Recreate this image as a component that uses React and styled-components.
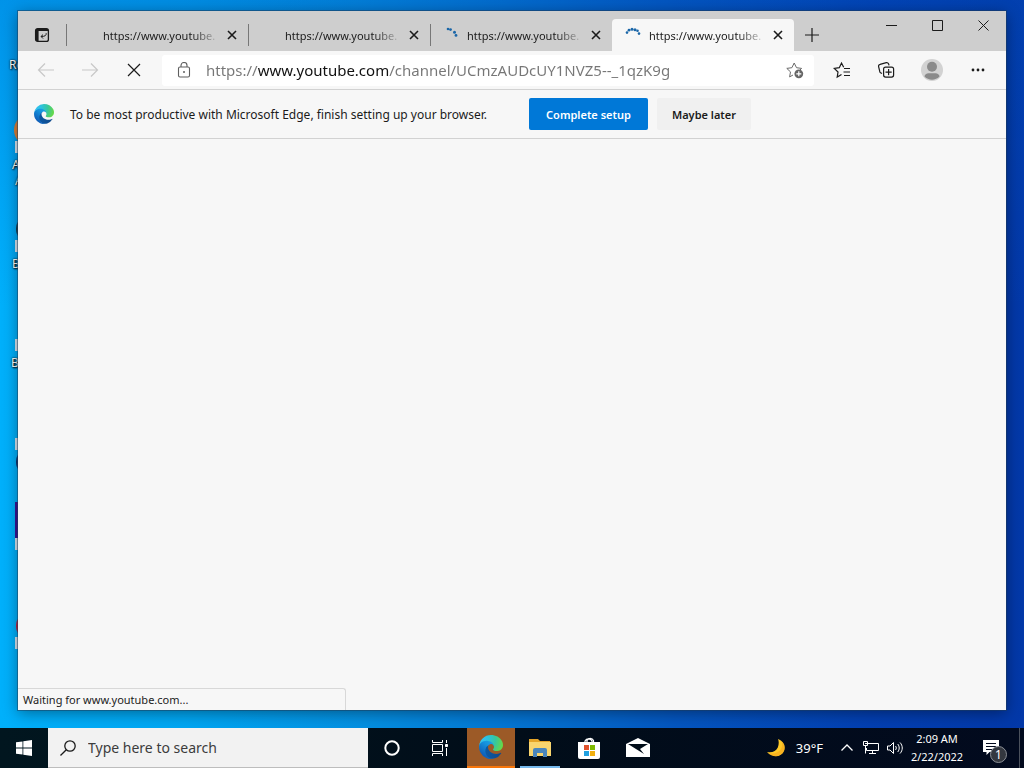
import React, { useState } from 'react';
import styled, { createGlobalStyle } from 'styled-components';

const GlobalStyle = createGlobalStyle`
    * {
        box-sizing: border-box;
    }

    body {
        margin: 0;
        font-family: "Noto Sans", "Open Sans", sans-serif;
        font-size: 11px;
        color: #1b1b1b;
    }

    button, input {
        font-family: inherit;
        border: none;
        outline: none;
        padding: 0;
    }

    svg {
        display: block;
        flex: none;
    }
`;

const Screen = styled.div`
    position: relative;
    display: grid;
    grid-template-rows: 1fr 40px;
    height: 100vh;
    overflow: hidden;
    background:
        linear-gradient(to bottom, rgba(0, 80, 190, 0.3), rgba(0, 80, 190, 0) 40%),
        linear-gradient(to right, #00b0fb 0%, #00a6f2 18%, #0490e2 35%, #0478d4 48%, #0456c0 66%, #033fb2 85%, #0338a8 100%);
`;

const DesktopItem = styled.div`
    position: absolute;
    top: ${props => props.$top}px;
    left: ${props => props.$left}px;
    color: white;
    font-size: 12px;
    line-height: 16px;
    text-shadow: 1px 1px 2px black, 0 0 2px black;
`;

const Window = styled.main`
    position: relative;
    display: flex;
    flex-direction: column;
    min-width: 0;
    margin: 11px 18px 18px;
    background: #f7f7f7;
    box-shadow: 0 0 0 1px rgba(30, 60, 90, 0.5), 0 3px 14px rgba(0, 0, 0, 0.4);
`;

const TabStrip = styled.div`
    display: flex;
    height: 40px;
    background: #cecece;
`;

const IconButton = styled.button`
    display: flex;
    align-items: center;
    justify-content: center;
    flex: none;
    width: ${props => props.$width || 44}px;
    height: ${props => props.$height || 32}px;
    background: transparent;
    color: ${props => props.disabled ? '#c8c8c8' : '#1b1b1b'};
`;

const TabList = styled.div`
    display: flex;
    align-items: flex-end;
    min-width: 0;
`;

const Tab = styled.div`
    display: flex;
    align-items: center;
    width: 182px;
    height: 32px;
    padding: 0 4px 0 12px;
    border-left: 1px solid ${props => props.$line ? '#777777' : 'transparent'};
    border-image: ${props => props.$line ? 'linear-gradient(transparent 6px, #777777 6px, #777777 26px, transparent 26px) 1' : 'none'};
    border-radius: ${props => props.$active ? '4px 4px 0 0' : '0'};
    background: ${props => props.$active ? '#f7f7f7' : 'transparent'};
`;

const TabIcon = styled.span`
    flex: none;
    width: 16px;
    height: 16px;
    margin-right: 8px;
`;

const TabTitle = styled.span`
    flex: 1;
    white-space: nowrap;
    mask-image: linear-gradient(to right, black 76%, transparent);
`;

const WindowButtons = styled.div`
    display: flex;
    margin-left: auto;
`;

const Toolbar = styled.div`
    display: flex;
    align-items: center;
    height: 39px;
    padding: 0 6px;
    border-bottom: 1px solid #d2d2d2;
`;

const AddressBar = styled.label`
    display: flex;
    align-items: center;
    flex: 1;
    min-width: 0;
    height: 31px;
    margin: 0 6px;
    border-radius: 3px;
    background: white;
    color: #5f5f5f;
`;

const LockBox = styled.span`
    display: flex;
    justify-content: center;
    width: 44px;
`;

const AddressInput = styled.input`
    flex: 1;
    min-width: 0;
    height: 30px;
    font-size: 15px;
    color: transparent;
    caret-color: black;
    background: linear-gradient(to right, #767676 52px, #111111 52px, #111111 183px, #767676 183px);
    background-clip: text;
`;

const SetupBar = styled.div`
    display: flex;
    align-items: center;
    height: 49px;
    padding: 0 16px;
    border-bottom: 1px solid #d2d2d2;
    font-size: 12px;
`;

const SetupText = styled.span`
    flex: 0 1 427px;
    margin: 0 32px 0 16px;
    white-space: nowrap;
`;

const SetupButton = styled.button`
    flex: none;
    width: ${props => props.$primary ? 119 : 94}px;
    height: 32px;
    margin-right: 9px;
    border-radius: 2px;
    font-size: 11px;
    font-weight: 600;
    color: ${props => props.$primary ? 'white' : '#1b1b1b'};
    background: ${props => props.$primary ? '#0078d7' : '#f0f0f0'};
`;

const Page = styled.section`
    flex: 1;
`;

const StatusBubble = styled.div`
    position: absolute;
    bottom: 0;
    left: 0;
    width: 328px;
    height: 22px;
    padding-left: 5px;
    line-height: 22px;
    border-top: 1px solid #d8d8d8;
    border-right: 1px solid #d8d8d8;
    border-radius: 0 3px 0 0;
    background: #f7f7f7;
`;

const Taskbar = styled.footer`
    display: flex;
    position: relative;
    min-width: 0;
    background: linear-gradient(to right, #01161f, #010d19 50%, #020a1e);
    color: white;
`;

const TaskButton = styled.button`
    display: flex;
    align-items: center;
    justify-content: center;
    flex: none;
    width: ${props => props.$width || 48}px;
    color: white;
    background: ${props => props.$alert ? '#9c5a27' : 'transparent'};
    border-bottom: ${props => props.$alert ? '2px solid #f7760b' : 'none'};
`;

const AppButtons = styled.div`
    display: flex;
    gap: 1px;
    margin-left: 3px;
`;

const Underlined = styled(TaskButton)`
    background: linear-gradient(#76b9ed, #76b9ed) center bottom / 40px 2px no-repeat;
`;

const SearchBox = styled.label`
    display: flex;
    align-items: center;
    flex: 0 1 320px;
    min-width: 0;
    padding-left: 12px;
    gap: 12px;
    color: #1b1b1b;
    background: #f2f2f2;
    border-bottom: 1px solid #bdbdbd;
`;

const SearchInput = styled.input`
    flex: 1;
    min-width: 0;
    font-size: 14px;
    background: transparent;

    &::placeholder {
        color: #3c3c3c;
        opacity: 1;
    }
`;

const Tray = styled.div`
    display: flex;
    margin-left: auto;
    padding-right: 4px;
    border-right: 1px solid #4b515c;
    margin-right: 4px;
`;

const Weather = styled.button`
    display: flex;
    align-items: center;
    gap: 11px;
    margin-right: 12px;
    font-size: 13px;
    color: white;
    background: transparent;
`;

const Clock = styled.button`
    width: 60px;
    font-size: 11px;
    line-height: 18px;
    white-space: nowrap;
    color: white;
    background: transparent;
`;

const Notifications = styled(TaskButton)`
    position: relative;
`;

const Count = styled.span`
    position: absolute;
    top: 18px;
    right: 8px;
    width: 17px;
    height: 17px;
    line-height: 15px;
    border: 1px solid #8b8f96;
    border-radius: 50%;
    font-size: 12px;
    background: #33373f;
`;

const Line = ({ size = 20, width = 1, children, ...rest }) => (
    <svg width={size} height={size} viewBox={`0 0 ${size} ${size}`} fill="none" stroke="currentColor" strokeWidth={width} aria-hidden="true" {...rest}>
        {children}
    </svg>
);

const EdgeLogo = ({ size, id }) => (
    <svg width={size} height={size} viewBox="0 0 256 256" aria-hidden="true">
        <defs>
            <linearGradient id={`${id}-a`} x1="60" y1="177" x2="240" y2="177" gradientUnits="userSpaceOnUse">
                <stop offset="0" stopColor="#0c59a4" />
                <stop offset="1" stopColor="#114a8b" />
            </linearGradient>
            <linearGradient id={`${id}-b`} x1="150" y1="80" x2="45" y2="215" gradientUnits="userSpaceOnUse">
                <stop offset="0" stopColor="#1b9de2" />
                <stop offset="0.3" stopColor="#1595df" />
                <stop offset="1" stopColor="#0f5fb9" />
            </linearGradient>
            <radialGradient id={`${id}-c`} cx="26" cy="48" r="230" gradientUnits="userSpaceOnUse">
                <stop offset="0" stopColor="#35c1f1" />
                <stop offset="0.3" stopColor="#2cc2df" />
                <stop offset="0.65" stopColor="#36c79e" />
                <stop offset="1" stopColor="#66d849" />
            </radialGradient>
        </defs>
        <path fill={`url(#${id}-a)`} d="M231 190.5c-3.4 1.8-6.9 3.4-10.5 4.7a101.5 101.5 0 0 1-35.9 6.5c-47.3 0-88.5-32.5-88.5-74.3 0-11.5 6.4-21.9 16.5-27.5-42.8 1.8-53.8 46.4-53.8 72.5 0 73.9 68.1 81.4 82.8 81.4 7.9 0 19.8-2.3 27-4.6l1.3-.4a128.3 128.3 0 0 0 66.6-52.8 4 4 0 0 0-5.5-5.5z" />
        <path fill={`url(#${id}-b)`} d="M105.7 241.4a79.2 79.2 0 0 1-22.7-21.3 80.7 80.7 0 0 1 29.5-120c3.2-1.5 8.5-4.1 15.6-4a32.4 32.4 0 0 1 25.7 13 31.9 31.9 0 0 1 6.3 18.7c0-.2 24.5-79.6-80-79.6-43.9 0-80 41.7-80 78.2 0 19.3 4.2 38.4 12.1 56a128 128 0 0 0 156.5 67.1 75.5 75.5 0 0 1-62.8-8.1z" />
        <path fill={`url(#${id}-c)`} d="M152.3 148.9c-.8 1-3.3 2.5-3.3 5.7 0 2.6 1.7 5.1 4.7 7.2 14.4 10 41.5 8.7 41.6 8.7 10.7 0 21.1-2.9 30.3-8.3 18.8-11 30.4-31.2 30.4-53 .3-22.4-8-37.3-11.3-43.9C223.5 23.9 177.7 0 128 0A128 128 0 0 0 0 126.2c.5-36.5 36.8-66 80-66 3.5 0 23.5.3 42 10.1 16.3 8.6 24.9 18.9 30.8 29.2 6.2 10.7 7.3 24.1 7.3 29.5 0 5.3-2.7 13.3-7.8 19.9z" />
    </svg>
);

const spinners = {
    short: [[5, 2, 1.3], [7.5, 2.6, 1.4], [11.5, 5.2, 1.5], [13, 8.4, 1.4]],
    long: [[2, 5.6, 1.3], [4, 3.2, 1.4], [7, 2.2, 1.5], [10, 2.8, 1.5], [12.5, 3.8, 1.3], [14, 6.6, 1.3]],
};

const Spinner = ({ kind }) => (
    <svg width="16" height="16" viewBox="0 0 16 16" fill="#1a66a8" aria-hidden="true">
        {spinners[kind].map(([x, y, r]) => <circle key={x} cx={x} cy={y} r={r} />)}
    </svg>
);

const tabs = [
    { id: 1 },
    { id: 2 },
    { id: 3, spinner: 'short' },
    { id: 4, spinner: 'long', active: true },
];

const desktopItems = [
    { top: 57, left: 9, label: 'Re' },
    { top: 157, left: 12, label: 'A' },
    { top: 173, left: 15, label: 'A' },
    { top: 256, left: 12, label: 'B' },
    { top: 355, left: 11, label: 'B' },
];

const shortcuts = [
    { top: 114, color: '#d9803a', radius: 16 },
    { top: 213, color: '#1b3a4c', radius: 14 },
    { top: 312 },
    { top: 411 },
    { top: 446, color: '#12306e', radius: 14, bare: true },
    { top: 511, color: '#3a1496' },
    { top: 610, color: '#c81e3c', radius: 14 },
];

const Desktop = () => (
    <>
        {shortcuts.map(item => (
            <DesktopItem key={item.top} $top={item.top} $left={14}>
                <svg width="32" height="40" viewBox="0 0 32 40" overflow="visible" aria-hidden="true">
                    {item.color && (item.radius
                        ? <circle cx="16" cy="16" r={item.radius} fill={item.color} />
                        : <path fill={item.color} d="M1-9h30v36H1z" />)}
                    {!item.bare && <path fill="#d9e4ee" d="M1 27h12v12H1z" />}
                </svg>
            </DesktopItem>
        ))}
        {desktopItems.map(item => (
            <DesktopItem key={item.top} $top={item.top} $left={item.left}>{item.label}</DesktopItem>
        ))}
    </>
);

const Tabs = () => (
    <TabStrip>
        <IconButton $width={48} $height={48} aria-label="Tab actions">
            <Line size={16} width={1.3}>
                <rect x="1.6" y="1.6" width="12.8" height="12.8" rx="2" />
                <path d="M2 3h12" strokeWidth="2" />
                <path d="M3.3 4v10" strokeWidth="2.6" />
                <path d="M12.2 6.2c.2 2.4-1.400 3.300-5 3.300M9 7.600L7 9.500l2 2" strokeWidth="1" />
            </Line>
        </IconButton>
        <TabList>
            {tabs.map(tab => (
                <Tab key={tab.id} $active={tab.active} $line={tab.id < 4}>
                    <TabIcon>{tab.spinner && <Spinner kind={tab.spinner} />}</TabIcon>
                    <TabTitle>https://www.youtube.</TabTitle>
                    <IconButton $width={24} aria-label="Close tab">
                        <Line size={10} width={1.6}><path d="M1 1l8 8M9 1L1 9" /></Line>
                    </IconButton>
                </Tab>
            ))}
        </TabList>
        <IconButton $width={36} $height={48} aria-label="New tab">
            <Line size={14} width={1.2}><path d="M7 0v14M0 7h14" /></Line>
        </IconButton>
        <WindowButtons>
            <IconButton $width={46} $height={28} aria-label="Minimize">
                <Line size={11}><path d="M0 5.5h11" /></Line>
            </IconButton>
            <IconButton $width={46} $height={28} aria-label="Maximize">
                <Line size={11}><path d="M.5.5h10v10H.5z" /></Line>
            </IconButton>
            <IconButton $width={46} $height={28} aria-label="Close">
                <Line size={11}><path d="M.5.5l10 10M10.5.5l-10 10" /></Line>
            </IconButton>
        </WindowButtons>
    </TabStrip>
);

const NavBar = () => {
    const [url, setUrl] = useState('https://www.youtube.com/channel/UCmzAUDcUY1NVZ5--_1qzK9g');

    return (
        <Toolbar>
            <IconButton disabled aria-label="Back">
                <Line size={18} width={1.2}><path d="M17 9H1.5M8 2.5L1.5 9 8 15.5" /></Line>
            </IconButton>
            <IconButton disabled aria-label="Forward">
                <Line size={18} width={1.2}><path d="M1 9h15.5M10 2.5L16.5 9 10 15.5" /></Line>
            </IconButton>
            <IconButton aria-label="Stop">
                <Line size={14} width={1.2}><path d="M1 1l12 12M13 1L1 13" /></Line>
            </IconButton>
            <AddressBar>
                <LockBox>
                    <Line size={16} width={1.1}>
                        <rect x="2.5" y="5" width="11" height="10" rx="1.5" />
                        <path d="M5 5V3.5a3 3 0 0 1 6 0V5" />
                        <circle cx="8" cy="10" r="1" fill="currentColor" stroke="none" />
                    </Line>
                </LockBox>
                <AddressInput type="text" aria-label="Address" spellCheck="false" value={url} onChange={event => setUrl(event.target.value)} />
                <IconButton $width={38} aria-label="Add this page to favorites">
                    <Line size={18} stroke="#6a6a6a">
                        <path d="M7 14l-3.4 1.900.9-5L.8 7.400l5.100-.700L8.200 2l2.300 4.700 5.100.700-2 2" />
                        <circle cx="12.8" cy="12.8" r="4.4" fill="#666666" stroke="none" />
                        <path d="M12.8 10.3v5M10.3 12.8h5" stroke="white" strokeWidth="1.2" />
                    </Line>
                </IconButton>
            </AddressBar>
            <IconButton aria-label="Favorites">
                <Line size={18} width={1.2}>
                    <path d="M8.5 13.6l-4.300 2.500.8-5.100L1.300 7.400l5-.700L8.500 2l2.200 4.300M11 7.500h6M10.500 11H17M11 14.500h6" />
                </Line>
            </IconButton>
            <IconButton aria-label="Collections">
                <Line size={18} width={1.2}>
                    <rect x="6.6" y="6.1" width="10" height="10" rx="2" />
                    <path d="M11.6 8v6.2M8.5 11.1h6.2" />
                    <path d="M5 12.5l-1.400-.8a2 2 0 0 1-.8-1L1.600 5.700a2 2 0 0 1 1.500-2.400l6.200-1.600a2 2 0 0 1 2.400 1.500l.3 1.200" />
                </Line>
            </IconButton>
            <IconButton $width={48} aria-label="Profile">
                <svg width="22" height="22" viewBox="0 0 22 22" aria-hidden="true">
                    <circle cx="11" cy="11" r="11" fill="#d2d2d2" />
                    <circle cx="11" cy="7.8" r="5" fill="#8a8a8a" />
                    <path fill="#8a8a8a" d="M3.500 17.500c0-2 2-3.300 4-3.300h7c2 0 4 1.300 4 3.300a10.500 10.500 0 0 1-15 0z" />
                </svg>
            </IconButton>
            <IconButton aria-label="Settings and more">
                <Line size={16} fill="currentColor" stroke="none">
                    <circle cx="3" cy="8" r="1.4" />
                    <circle cx="8" cy="8" r="1.4" />
                    <circle cx="13" cy="8" r="1.4" />
                </Line>
            </IconButton>
        </Toolbar>
    );
};

const Setup = () => (
    <SetupBar>
        <EdgeLogo size={20} id="setup" />
        <SetupText>To be most productive with Microsoft Edge, finish setting up your browser.</SetupText>
        <SetupButton $primary>Complete setup</SetupButton>
        <SetupButton>Maybe later</SetupButton>
    </SetupBar>
);

const TaskbarRow = () => (
    <Taskbar>
        <TaskButton aria-label="Start">
            <svg width="16" height="16" viewBox="0 0 16 16" fill="white" aria-hidden="true">
                <path d="M0 2.3l6.500-.9v6.200H0zM7.300 1.300L16 0v7.600H7.300zM0 8.400h6.500v6.200L0 13.700zM7.300 8.400H16V16l-8.700-1.300z" />
            </svg>
        </TaskButton>
        <SearchBox>
            <Line size={16} width={1.3}>
                <circle cx="10" cy="6" r="5.2" />
                <path d="M6.3 9.7L.5 15.5" />
            </Line>
            <SearchInput type="text" aria-label="Search" placeholder="Type here to search" />
        </SearchBox>
        <TaskButton aria-label="Cortana">
            <Line size={16} width={2}><circle cx="8" cy="8" r="6.7" /></Line>
        </TaskButton>
        <TaskButton aria-label="Task view">
            <Line size={16}>
                <path d="M.5 0v2.500h10V0M.5 16v-2.500h10V16M.5 4.500h10v7H.5zM14.500 0v3M14.500 8v8" />
                <path fill="currentColor" d="M13.500 4.500h2v2h-2z" />
            </Line>
        </TaskButton>
        <AppButtons>
            <TaskButton $alert aria-label="Microsoft Edge">
                <EdgeLogo size={24} id="task" />
            </TaskButton>
            <Underlined aria-label="File Explorer">
                <svg width="22" height="20" viewBox="0 0 22 20" aria-hidden="true">
                    <path fill="#e5a528" d="M0 1h9l2 2h10v4H0z" />
                    <path fill="#f9d56e" d="M0 4h22v14H0z" />
                    <path fill="#4a86bd" d="M4 19v-7a2 2 0 0 1 2-2h10a2 2 0 0 1 2 2v7h-4v-4H8v4z" />
                </svg>
            </Underlined>
            <TaskButton aria-label="Microsoft Store">
                <svg width="24" height="24" viewBox="0 0 24 24" aria-hidden="true">
                    <path fill="none" stroke="white" strokeWidth="1.2" d="M8 7V5a4 4 0 0 1 7 0v2M10 7V4.500a3.500 3.500 0 0 1 6.500 0V7" />
                    <path fill="white" d="M1 6h22v15a2 2 0 0 1-2 2H3a2 2 0 0 1-2-2z" />
                    <path fill="#e0512c" d="M7 9h5v5H7z" />
                    <path fill="#7fba00" d="M13 9h5v5h-5z" />
                    <path fill="#20a0e0" d="M7 15h5v5H7z" />
                    <path fill="#f2b010" d="M13 15h5v5h-5z" />
                </svg>
            </TaskButton>
            <TaskButton aria-label="Mail">
                <svg width="24" height="20" viewBox="0 0 24 20" aria-hidden="true">
                    <path fill="white" d="M0 6l12-6 12 6v13H0z" />
                    <path fill="#010d19" d="M2 6h20l-8 5 4 5L2 6z" />
                </svg>
            </TaskButton>
        </AppButtons>
        <Tray>
            <Weather>
                <svg width="18" height="18" viewBox="0 0 18 18" aria-hidden="true">
                    <path fill="#ffc928" d="M11 0c5.500 2 8 7 6 12-2.500 6-11 7.500-17 1 5 1 9-.5 10.800-4.500C12 5.500 12 2.500 11 0z" />
                    <path fill="#f3a51c" d="M1 13.800c5 1.500 10.500.2 13-3.800 1.400-2.300 1.500-5 .5-7.700 3 2.500 4 6.200 2.500 9.700-2.500 6-10.500 7-16 1.800z" opacity=".6" />
                </svg>
                39°F
            </Weather>
            <TaskButton $width={24} aria-label="Show hidden icons">
                <Line size={12} width={1.3}><path d="M.5 8.500L6 3l5.500 5.500" /></Line>
            </TaskButton>
            <TaskButton $width={24} aria-label="Network">
                <Line size={16}>
                    <path d="M5 3.500h10.500v7H3.500V8M9.500 10.500v3M6 13.500h7M2.500 6v7.500M.5 1.500h4v4h-4zM2 3.500h2" />
                </Line>
            </TaskButton>
            <TaskButton $width={24} aria-label="Volume">
                <Line size={16}>
                    <path d="M.5 6v4H3l3.500 3.500v-11L3 6zM8.500 6c1 1.200 1 2.800 0 4M10.700 4c2 2.300 2 5.700 0 8M13 2.500c3 3.200 3 7.800 0 11" />
                </Line>
            </TaskButton>
            <Clock>2:09 AM<br />2/22/2022</Clock>
            <Notifications aria-label="Notifications">
                <svg width="16" height="16" viewBox="0 0 16 16" aria-hidden="true">
                    <path fill="white" d="M0 0h16v12H6.500L3.500 15v-3H0z" />
                    <path stroke="#020a1e" d="M3 3.500h10M3 6.500h10M3 9.500h6" />
                </svg>
                <Count>1</Count>
            </Notifications>
        </Tray>
    </Taskbar>
);

const App = () => (
    <Screen>
        <GlobalStyle />
        <Desktop />
        <Window>
            <Tabs />
            <NavBar />
            <Setup />
            <Page />
            <StatusBubble>Waiting for www.youtube.com...</StatusBubble>
        </Window>
        <TaskbarRow />
    </Screen>
);

export default App;
